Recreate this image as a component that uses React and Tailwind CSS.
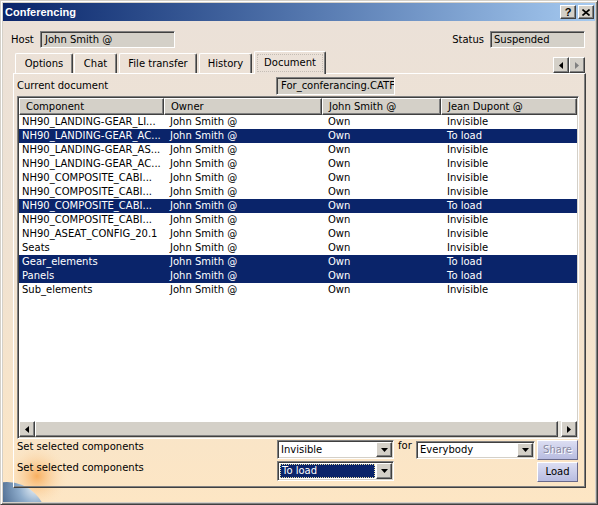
import React from 'react';

const raised =
  'border border-t-white border-l-white border-r-[#404040] border-b-[#404040] shadow-[inset_-1px_-1px_0_#808080,inset_1px_1px_0_#d4d0c8]';
const sunken =
  'border border-t-[#808080] border-l-[#808080] border-r-white border-b-white shadow-[inset_1px_1px_0_#404040,inset_-1px_-1px_0_#d4d0c8]';

const rows = [
  ['NH90_LANDING-GEAR_LI...', false, 'Invisible'],
  ['NH90_LANDING-GEAR_AC...', true, 'To load'],
  ['NH90_LANDING-GEAR_AS...', false, 'Invisible'],
  ['NH90_LANDING-GEAR_AC...', false, 'Invisible'],
  ['NH90_COMPOSITE_CABI...', false, 'Invisible'],
  ['NH90_COMPOSITE_CABI...', false, 'Invisible'],
  ['NH90_COMPOSITE_CABI...', true, 'To load'],
  ['NH90_COMPOSITE_CABI...', false, 'Invisible'],
  ['NH90_ASEAT_CONFIG_20.1', false, 'Invisible'],
  ['Seats', false, 'Invisible'],
  ['Gear_elements', true, 'To load'],
  ['Panels', true, 'To load'],
  ['Sub_elements', false, 'Invisible'],
];

const tabs = [
  { label: 'Options', cls: 'w-[58px]' },
  { label: 'Chat', cls: 'w-[43px] ml-px' },
  { label: 'File transfer', cls: 'w-[78px] ml-[2px]' },
  { label: 'History', cls: 'w-[53px] ml-[2px]' },
];

function Arrow({ dir = 'down', color = '#000' }) {
  const pts = {
    down: '0,0 7,0 3.5,4',
    left: '4,0 4,7 0,3.5',
    right: '0,0 0,7 4,3.5',
  }[dir];
  const w = dir === 'down' ? 7 : 4;
  const h = dir === 'down' ? 4 : 7;
  return (
    <svg width={w} height={h} viewBox={`0 0 ${w} ${h}`}>
      <polygon points={pts} fill={color} />
    </svg>
  );
}

function Combo({ value, className, focused }) {
  return (
    <div className={`${sunken} bg-white flex p-px ${className}`}>
      {focused ? (
        <div className="flex-1 flex items-center m-px pl-px bg-[#0a246a] text-white border border-dotted border-[#e6dca0]">
          {value}
        </div>
      ) : (
        <div className="flex-1 flex items-center pl-[2px]">{value}</div>
      )}
      <div className={`${raised} bg-[#d4d0c8] w-[16px] flex items-center justify-center`}>
        <Arrow dir="down" />
      </div>
    </div>
  );
}

export default function App() {
  return (
    <div className="w-[598px] h-[505px] bg-[#d4d0c8] border border-t-[#d4d0c8] border-l-[#d4d0c8] border-r-[#404040] border-b-[#404040] shadow-[inset_1px_1px_0_#ffffff,inset_-1px_-1px_0_#808080] p-[2px] flex flex-col font-['DejaVu_Sans',sans-serif] text-[10px] text-black leading-none overflow-hidden">
      {/* title bar */}
      <div className="h-[18px] shrink-0 flex items-center pl-[2px] pr-[1px] bg-linear-to-r from-[#0a246a] to-[#a6caf0]">
        <span className="font-['Liberation_Sans',sans-serif] font-bold text-[11px] text-white">Conferencing</span>
        <div className="ml-auto flex gap-[2px]">
          <div className={`${raised} bg-[#d4d0c8] w-[16px] h-[14px] flex items-center justify-center font-['Liberation_Sans',sans-serif] font-bold text-[11px]`}>
            ?
          </div>
          <div className={`${raised} bg-[#d4d0c8] w-[16px] h-[14px] flex items-center justify-center`}>
            <svg width="8" height="7" viewBox="0 0 8 7">
              <path d="M0.5 0.5 L7.5 6.5 M7.5 0.5 L0.5 6.5" stroke="#000" strokeWidth="1.6" />
            </svg>
          </div>
        </div>
      </div>

      {/* client area */}
      <div className="relative flex-1 flex flex-col bg-linear-to-b from-[#ebe1d8] via-[#f0e2d1] to-[#fde6c4]">
        <svg className="absolute left-0 bottom-0" width="90" height="60" viewBox="0 0 90 60">
          <defs>
            <radialGradient id="glow" cx="34" cy="34" r="32" gradientUnits="userSpaceOnUse">
              <stop offset="0" stopColor="#f7a44c" stopOpacity="0.85" />
              <stop offset="1" stopColor="#fde6c4" stopOpacity="0" />
            </radialGradient>
            <radialGradient id="globe" cx="32" cy="46" r="46" gradientUnits="userSpaceOnUse">
              <stop offset="0" stopColor="#e8f0f6" />
              <stop offset="0.35" stopColor="#8eaccb" />
              <stop offset="1" stopColor="#2c4a72" />
            </radialGradient>
          </defs>
          <rect width="90" height="60" fill="url(#glow)" />
          <circle cx="4" cy="80" r="40" fill="url(#globe)" />
        </svg>

        {/* host / status */}
        <div className="relative mt-[10px] h-[17px] flex items-center pl-[8px] pr-[10px]">
          <span className="w-[29px]">Host</span>
          <div className={`${sunken} bg-[#d4d0c8] w-[135px] h-[17px] flex items-center pl-[4px]`}>John Smith @</div>
          <span className="ml-auto mr-[6px]">Status</span>
          <div className={`${sunken} bg-[#d4d0c8] w-[95px] h-[17px] flex items-center pl-[3px]`}>Suspended</div>
        </div>

        {/* tabs */}
        <div className="relative mt-[3px] h-[22px] flex items-end pl-[12px] pr-[10px]">
          {tabs.map((t) => (
            <div
              key={t.label}
              className={`${t.cls} h-[20px] flex items-center justify-center border-t border-l border-r border-t-white border-l-white border-r-[#404040] rounded-t-[2px] shadow-[inset_-1px_0_0_#808080]`}
            >
              {t.label}
            </div>
          ))}
          <div className="relative z-10 -mb-px ml-[2px] w-[72px] h-[23px] p-[2px] bg-[#ebe1d8] border-t border-l border-r border-t-white border-l-white border-r-[#404040] rounded-t-[2px] shadow-[inset_-1px_0_0_#808080]">
            <div className="h-full flex items-center justify-center border border-dotted border-[#c4bdb5]">Document</div>
          </div>
          <div className="ml-auto flex">
            <div className={`${raised} bg-[#d4d0c8] w-[16px] h-[16px] flex items-center justify-center`}>
              <Arrow dir="left" />
            </div>
            <div className={`${raised} bg-[#d4d0c8] w-[16px] h-[16px] flex items-center justify-center`}>
              <Arrow dir="right" color="#808080" />
            </div>
          </div>
        </div>

        {/* tab page */}
        <div className="relative ml-[10px] mr-[9px] h-[415px] border border-t-white border-l-white border-r-[#404040] border-b-[#404040] shadow-[inset_-1px_-1px_0_#808080] pt-[3px] pl-[3px] flex flex-col">
          <div className="h-[18px] flex items-center">
            <span className="w-[259px]">Current document</span>
            <div className={`${sunken} bg-[#d4d0c8] w-[119px] h-[18px] flex items-center pl-[4px] overflow-hidden whitespace-nowrap`}>
              For_conferancing.CATF
            </div>
          </div>

          {/* table */}
          <div className={`${sunken} mt-px w-[562px] h-[343px] p-px flex flex-col bg-white`}>
            <div className="h-[17px] flex shrink-0">
              {[
                ['Component', 'w-[145px]'],
                ['Owner', 'w-[158px]'],
                ['John Smith @', 'w-[119px]'],
                ['Jean Dupont @', 'w-[136px]'],
              ].map(([h, w]) => (
                <div key={h} className={`${raised} ${w} bg-[#d4d0c8] flex items-center pl-[6px]`}>
                  {h}
                </div>
              ))}
            </div>
            <div className="flex-1 bg-white">
              {rows.map(([name, sel, state], i) => (
                <div
                  key={i}
                  className={`h-[14px] leading-[14px] flex whitespace-nowrap ${sel ? 'bg-[#0a246a] text-white' : ''}`}
                >
                  <div className="w-[145px] pl-[3px]">{name}</div>
                  <div className="w-[158px] pl-[6px]">John Smith @</div>
                  <div className="w-[119px] pl-[6px]">Own</div>
                  <div className="w-[136px] pl-[6px]">{state}</div>
                </div>
              ))}
            </div>
            <div className="h-[16px] flex shrink-0 bg-[#e6e3dc]">
              <div className={`${raised} bg-[#d4d0c8] w-[16px] flex items-center justify-center`}>
                <Arrow dir="left" />
              </div>
              <div className={`${raised} bg-[#d4d0c8] flex-1`} />
              <div className="w-[3px]" />
              <div className={`${raised} bg-[#d4d0c8] w-[16px] flex items-center justify-center`}>
                <Arrow dir="right" />
              </div>
            </div>
          </div>

          {/* bottom controls */}
          <div className="mt-px flex">
            <div className="w-[260px] flex flex-col">
              <div className="h-[21px] leading-[14px]">Set selected components</div>
              <div className="leading-[14px]">Set selected components</div>
            </div>
            <div className="w-[117px] flex flex-col gap-[2px]">
              <Combo value="Invisible" className="h-[19px]" />
              <Combo value="To load" className="h-[20px]" focused />
            </div>
            <div className="w-[22px] pl-[4px] leading-[12px]">for</div>
            <Combo value="Everybody" className="mt-px w-[119px] h-[18px]" />
            <div className="ml-[2px] flex flex-col gap-[2px]">
              <div className="w-[41px] h-[20px] flex items-center justify-center bg-linear-to-b from-[#dcdef2] to-[#b8bce0] border border-t-white border-l-white border-r-[#6a6a8a] border-b-[#6a6a8a] text-[#8a8aa2] [text-shadow:1px_1px_0_#ffffff]">
                Share
              </div>
              <div className="w-[41px] h-[20px] flex items-center justify-center bg-linear-to-b from-[#dcdef2] to-[#b8bce0] border border-t-white border-l-white border-r-[#6a6a8a] border-b-[#6a6a8a]">
                Load
              </div>
            </div>
          </div>
        </div>
      </div>
    </div>
  );
}
